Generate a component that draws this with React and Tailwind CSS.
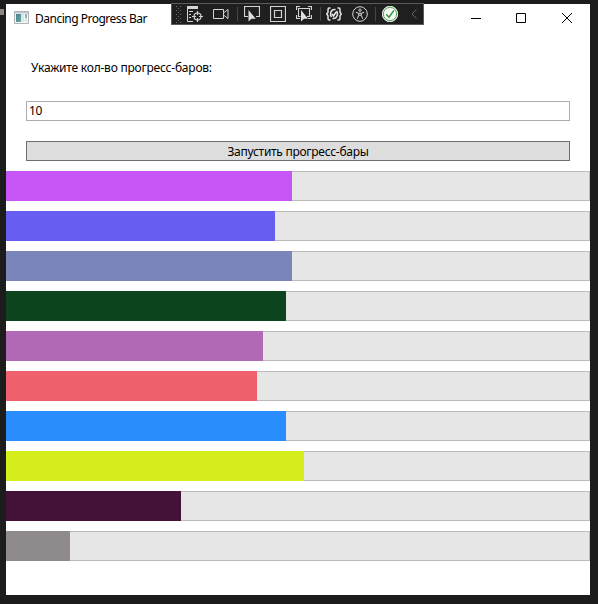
const BARS = [
  { color: '#c755f5', width: 286 },
  { color: '#675df1', width: 268.5 },
  { color: '#7b85bc', width: 286 },
  { color: '#0d4420', width: 280 },
  { color: '#b169b5', width: 257 },
  { color: '#ef616c', width: 251 },
  { color: '#298dfc', width: 280 },
  { color: '#d6ee1c', width: 298 },
  { color: '#441138', width: 175 },
  { color: '#8f8a8b', width: 64 },
];

function Icon({ children, className = '' }) {
  return (
    <svg
      className={`block h-4 w-4 shrink-0 ${className}`}
      viewBox="0 0 16 16"
      fill="none"
      stroke="#d4d4d4"
      strokeWidth="1"
    >
      {children}
    </svg>
  );
}

function Separator({ className }) {
  return <div className={`h-3.5 w-px shrink-0 bg-[#464646] ${className}`} />;
}

function Grip() {
  const dots = [];
  for (let row = 0; row < 5; row++) {
    for (let col = 0; col < 2; col++) {
      dots.push(
        <rect key={`${row}-${col}`} x={col * 4} y={row * 4} width="1" height="1" fill="#6c6c6c" />
      );
    }
    if (row < 4) {
      dots.push(<rect key={`m${row}`} x="2" y={row * 4 + 2} width="1" height="1" fill="#6c6c6c" />);
    }
  }
  return (
    <svg className="ml-[4px] block h-[17px] w-[5px] shrink-0" viewBox="0 0 5 17">
      {dots}
    </svg>
  );
}

function DebugToolbar() {
  return (
    <div className="absolute top-[3px] left-[171px] flex h-[22px] w-[253px] items-center border border-[#5b5b5b] bg-[#1f1f1f]">
      <Grip />
      <Icon className="ml-[6px]">
        <path d="M0 0h11v3H0z" fill="#d4d4d4" stroke="none" />
        <path d="M.5 3v12.500H6M2 5.500h4M2 8.500h2M2 11.500h2" />
        <circle cx="10.500" cy="10.500" r="3.500" strokeWidth="1.200" />
        <path d="M10.500 5v4M10.500 12v4M5 10.500h4M12 10.500h4" strokeWidth="1.200" />
      </Icon>
      <Icon className="ml-[10px]">
        <path d="M.5 3.500h10v9H.5z" />
        <path d="M10.500 7l4.500-3.500v9L10.500 9" />
      </Icon>
      <Separator className="ml-[8px]" />
      <Icon className="ml-[6px]">
        <path d="M4 10.500H.5v-10h15v10H12" strokeWidth="1.200" />
        <path d="M4.500 4v11.500l3-2.800h4.200z" fill="#e0e0e0" stroke="none" />
      </Icon>
      <Icon className="ml-[10px]">
        <path d="M.5.5h15v15H.5zM4.500 4.500h7v7h-7z" strokeWidth="1.200" />
      </Icon>
      <Icon className="ml-[10px]">
        <path d="M.5 4V.5H4M12 .5h3.500V4M15.500 9v3.500H12M.5 9v3.500H4" strokeWidth="1.200" />
        <path d="M4.500 10.500h-2v-8h11v8H11" strokeWidth="1.100" />
        <path d="M5 4v11.500l3-2.800h4z" fill="#e0e0e0" stroke="none" />
      </Icon>
      <Separator className="ml-[8px]" />
      <Icon className="ml-[5px]">
        <path
          d="M4.500 2H3.200Q2 2 2 3.500v2.800L.7 8 2 9.700v2.800Q2 14 3.200 14h1.300M11.500 2h1.300Q14 2 14 3.500v2.800L15.300 8 14 9.700v2.800q0 1.500-1.200 1.500h-1.300"
          stroke="#e6e6e6"
          strokeWidth="1.500"
        />
        <path
          d="M9.500 3.500Q5 3 4.500 8q0 2 1 3M6.500 12.500Q11 13 11.500 8q0-2-1-3M6 8l1.500 2L10 6"
          stroke="#e6e6e6"
          strokeWidth="1.600"
        />
      </Icon>
      <Icon className="ml-[10px]">
        <circle cx="8" cy="8" r="7.300" />
        <circle cx="8" cy="4.200" r="1.200" />
        <path d="M3.800 6.300L6.700 7.300v2L5.300 12.800M12.200 6.300L9.300 7.300v2l1.400 3.500M6.700 7.300h2.600M6.800 9.500L8 9l1.200.5" />
      </Icon>
      <Separator className="ml-[7px]" />
      <Icon className="ml-[6px]">
        <circle cx="8" cy="8" r="7.700" fill="#e5f3e5" stroke="#dcebdc" />
        <circle cx="8" cy="8" r="6.600" fill="#f6faf6" stroke="#5ca763" />
        <path d="M4.200 8.200L7 11.200l4.800-6.700" stroke="#3b9446" strokeWidth="1.500" />
      </Icon>
      <svg className="ml-[13px] block h-[10px] w-[6px] shrink-0" viewBox="0 0 6 10" fill="none" stroke="#666">
        <path d="M5.500.5L1 5l4.500 4.500" />
      </svg>
    </div>
  );
}

function AppIcon() {
  return (
    <svg className="mt-px block h-[14px] w-4 shrink-0" viewBox="0 0 16 14">
      <defs>
        <linearGradient id="pane" x1="0" y1="0" x2="1" y2="1">
          <stop offset="0" stopColor="#477c9c" />
          <stop offset="1" stopColor="#69b090" />
        </linearGradient>
      </defs>
      <path d="M.5.5h14v12H.5z" fill="#f4f6f7" stroke="#aeb3b8" />
      <path d="M1 1h13v1.500H1z" fill="#c4c8ce" />
      <path d="M2 3h5v8H2z" fill="url(#pane)" />
      <path d="M7 3h3v8H7z" fill="#d5e8ea" />
      <path d="M11 3h2v4h-2z" fill="#8fb5bd" />
      <path d="M11 7h2v4h-2z" fill="#d7e3e6" />
    </svg>
  );
}

function TitleBar() {
  return (
    <div className="flex h-[30px] items-start justify-between">
      <div className="flex items-start pt-[6px] pl-2">
        <AppIcon />
        <span className="mt-px ml-[5px] text-[12px] leading-4 tracking-[-0.5px] whitespace-nowrap">Dancing Progress Bar</span>
      </div>
      <div className="flex gap-[35px] pt-[9px] pr-[17px]">
        <svg className="block h-[11px] w-[11px]" viewBox="0 0 11 11" stroke="#000" fill="none">
          <path d="M1 5.500h10" />
        </svg>
        <svg className="block h-[11px] w-[11px]" viewBox="0 0 11 11" stroke="#000" fill="none">
          <path d="M.5.5h9v9h-9z" />
        </svg>
        <svg className="block h-[11px] w-[11px]" viewBox="0 0 11 11" stroke="#000" fill="none">
          <path d="M0 0l10 10M10 0L0 10" />
        </svg>
      </div>
    </div>
  );
}

export default function App() {
  return (
    <div className="relative h-[604px] w-[598px] overflow-hidden bg-[#1c1c1c] px-[6px] pt-[4px] font-['Noto_Sans','Open_Sans',sans-serif] text-[12px] text-black">
      <div className="absolute top-[9px] left-0 h-[6px] w-[4px] bg-[#8a8782]" />
      <div className="flex h-[591px] w-[584px] flex-col bg-white">
        <TitleBar />
        <label className="mt-[26px] ml-[25px] block h-4 text-[12px] leading-4 tracking-[-0.22px] whitespace-nowrap">
          Укажите кол-во прогресс-баров:
        </label>
        <input
          className="mx-5 mt-[25px] block h-5 border border-[#abadb3] bg-white px-[2px] pb-[2px] text-[12px] leading-4 tracking-[-0.4px] outline-none"
          defaultValue="10"
        />
        <button className="mx-5 mt-5 flex h-5 items-center justify-center border border-[#707070] bg-[#dddddd] text-[12px] leading-4 tracking-[-0.28px]">
          <span className="pt-px">Запустить прогресс-бары</span>
        </button>
        <div className="mt-[10px] flex flex-col gap-[10px]">
          {BARS.map((bar, i) => (
            <div key={i} className="grid h-[30px] border border-[#bcbcbc] bg-[#e6e6e6]">
              <div className="-m-px" style={{ width: bar.width, background: bar.color }} />
            </div>
          ))}
        </div>
      </div>
      <DebugToolbar />
    </div>
  );
}
